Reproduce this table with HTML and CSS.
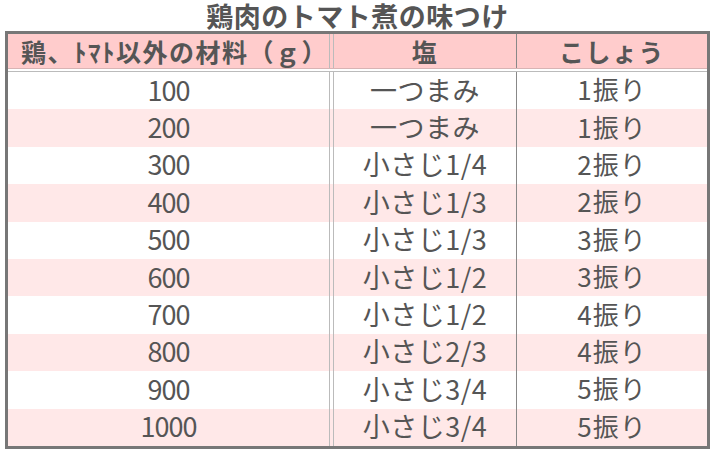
FILE: index.html
```html
<!DOCTYPE html>
<html lang="ja">
<head>
<meta charset="utf-8">
<link rel="stylesheet" href="styles.css">
</head>
<body>
<div class="page">
  <h1 class="title">鶏肉のトマト煮の味つけ</h1>
  <div class="table">
    <div class="row head">
      <div class="cell c1">鶏、ﾄﾏﾄ以外の材料（ｇ）</div>
      <div class="cell c2">塩</div>
      <div class="cell c3">こしょう</div>
    </div>
    <div class="body">
      <div class="row"><div class="cell c1">100</div><div class="cell c2">一つまみ</div><div class="cell c3">1振り</div></div>
      <div class="row alt"><div class="cell c1">200</div><div class="cell c2">一つまみ</div><div class="cell c3">1振り</div></div>
      <div class="row"><div class="cell c1">300</div><div class="cell c2">小さじ1/4</div><div class="cell c3">2振り</div></div>
      <div class="row alt"><div class="cell c1">400</div><div class="cell c2">小さじ1/3</div><div class="cell c3">2振り</div></div>
      <div class="row"><div class="cell c1">500</div><div class="cell c2">小さじ1/3</div><div class="cell c3">3振り</div></div>
      <div class="row alt"><div class="cell c1">600</div><div class="cell c2">小さじ1/2</div><div class="cell c3">3振り</div></div>
      <div class="row"><div class="cell c1">700</div><div class="cell c2">小さじ1/2</div><div class="cell c3">4振り</div></div>
      <div class="row alt"><div class="cell c1">800</div><div class="cell c2">小さじ2/3</div><div class="cell c3">4振り</div></div>
      <div class="row"><div class="cell c1">900</div><div class="cell c2">小さじ3/4</div><div class="cell c3">5振り</div></div>
      <div class="row alt"><div class="cell c1">1000</div><div class="cell c2">小さじ3/4</div><div class="cell c3">5振り</div></div>
    </div>
  </div>
</div>
</body>
</html>
```

FILE: styles.css
```css
html, body {
  margin: 0;
  padding: 0;
  background: #ffffff;
}

.page {
  width: 715px;
  height: 457px;
  font-family: "Noto Sans CJK JP", "Noto Sans", sans-serif;
  color: #555555;
}

.title {
  margin: 0;
  font-size: 27px;
  line-height: 31px;
  font-weight: 700;
  text-align: center;
  letter-spacing: 0.5px;
  color: #555555;
}

.table {
  margin-left: 5px;
  width: 699px;
  border: 3px solid #777777;
  background: #ffffff;
}

.row {
  display: grid;
  grid-template-columns: 322px 187px 1fr;
  height: 37.4px;
  align-items: stretch;
}

.row.alt {
  background: #ffe8e8;
}

.row.head {
  height: 34px;
  background: #ffcccc;
  border-bottom: 1px solid #d8b4b4;
  margin-bottom: 2px;
  font-weight: 700;
}

.body {
  border-top: 1px solid #bbbbbb;
}

.cell {
  display: flex;
  align-items: center;
  justify-content: center;
  padding-bottom: 3px;
  font-size: 27px;
  line-height: 1;
  white-space: nowrap;
}

.head .cell {
  padding-bottom: 0;
  font-size: 25px;
  letter-spacing: 1.5px;
}

.head .c1 {
  padding-left: 12px;
}

.c1 {
  border-right: 1px solid #bbbbbb;
  letter-spacing: -1px;
}

.c2 {
  margin-left: 3px;
  border-left: 1px solid #bbbbbb;
  border-right: 1px solid #888888;
  letter-spacing: 0.5px;
}

.c3 {
  font-size: 26px;
  letter-spacing: 1px;
}
```
